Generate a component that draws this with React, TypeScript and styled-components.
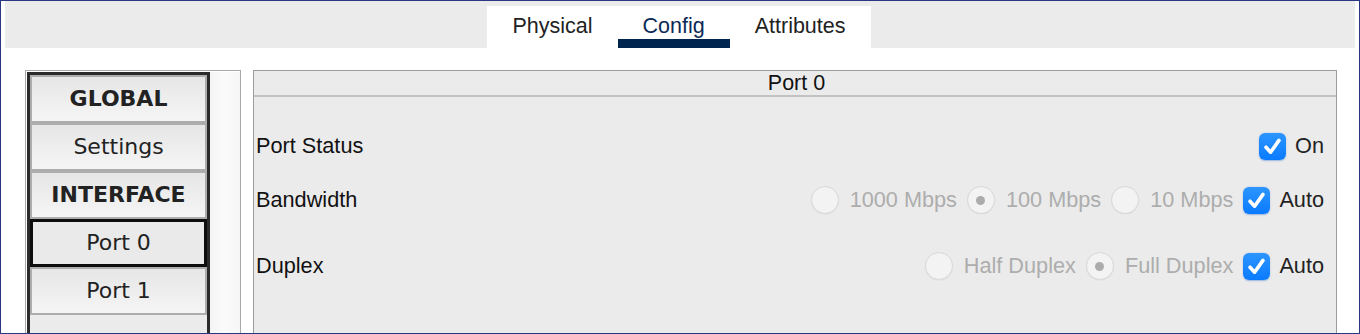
import React from "react";
import styled, { createGlobalStyle } from "styled-components";

const Global = createGlobalStyle`
  html, body { margin: 0; padding: 0; background: #ffffff; }
  * { box-sizing: border-box; }
`;

const Frame = styled.div`
  width: 1360px;
  height: 334px;
  border: 1px solid #2b3784;
  background: #ffffff;
  overflow: hidden;
  display: flex;
  flex-direction: column;
`;

const TopBar = styled.div`
  height: 47px;
  flex-shrink: 0;
  margin: 0 4px;
  background: #ebebeb;
  display: flex;
  justify-content: center;
  align-items: flex-end;
`;

const TabStrip = styled.div`
  display: flex;
  height: 42px;
  background: #ffffff;
  margin-left: -2px;
`;

const Tab = styled.div<{ $active?: boolean }>`
  height: 42px;
  padding: 8px 25px 0;
  display: flex;
  align-items: flex-start;
  font-family: "Liberation Sans", Arial, sans-serif;
  font-size: 21.5px;
  color: ${(p) => (p.$active ? "#0c2a55" : "#222222")};
  border-bottom: 9px solid ${(p) => (p.$active ? "#00264f" : "transparent")};
`;

const Body = styled.div`
  display: flex;
  align-items: flex-start;
  padding: 22px 0 0 24px;
  gap: 12px;
  flex: 1;
  min-height: 0;
  overflow: hidden;
`;

const Sidebar = styled.div`
  width: 216px;
  height: 270px;
  flex-shrink: 0;
  border: 1px solid #a8a8a8;
  border-bottom: none;
  background: #ffffff;
  display: flex;
  padding: 1px 0 0 1px;
`;

const List = styled.div`
  width: 183px;
  border: 3px solid #2b2b2b;
  border-bottom: none;
  background: #ebebeb;
  display: flex;
  flex-direction: column;
`;

const Track = styled.div`
  flex: 1;
  background: linear-gradient(to right, #f4f4f4, #fbfbfb 50%, #f6f6f6);
`;

const Item = styled.div<{ $bold?: boolean; $selected?: boolean }>`
  height: 48px;
  flex-shrink: 0;
  display: flex;
  align-items: center;
  justify-content: center;
  font-family: "DejaVu Sans", Verdana, sans-serif;
  font-size: 22px;
  font-weight: ${(p) => (p.$bold ? 700 : 400)};
  color: #222222;
  border: ${(p) => (p.$selected ? "3px solid #0d0d0d" : "2px solid #adadad")};
  background: ${(p) =>
    p.$selected ? "#eaeaea" : "linear-gradient(to bottom, #e6e6e6, #f5f5f5)"};
  padding-bottom: 1px;
`;

const Panel = styled.div`
  width: 1084px;
  height: 270px;
  flex-shrink: 0;
  border: 1px solid #9c9c9c;
  border-bottom: none;
  background: #ebebeb;
  display: flex;
  flex-direction: column;
`;

const PanelHeader = styled.div`
  height: 26px;
  flex-shrink: 0;
  border-bottom: 2px solid #c2c2c2;
  display: flex;
  align-items: center;
  justify-content: center;
  font-family: "Liberation Sans", Arial, sans-serif;
  font-size: 21.5px;
  color: #111111;
  padding-left: 3px;
`;

const Rows = styled.div`
  display: flex;
  flex-direction: column;
  padding-top: 25px;
`;

const Row = styled.div<{ $space: number }>`
  height: 48px;
  flex-shrink: 0;
  margin-top: ${(p) => p.$space}px;
  display: flex;
  align-items: center;
  justify-content: space-between;
  padding: 0 12px 0 2px;
  font-family: "Liberation Sans", Arial, sans-serif;
  font-size: 21.7px;
`;

const Label = styled.span`
  color: #111111;
`;

const Controls = styled.div`
  display: flex;
  align-items: center;
  gap: 10px;
`;

const Option = styled.label<{ $gap: number }>`
  display: flex;
  align-items: center;
  gap: ${(p) => p.$gap}px;
`;

const RadioCircle = styled.span<{ $checked?: boolean }>`
  width: 28px;
  height: 28px;
  border-radius: 50%;
  background: #f3f3f3;
  border: 1px solid #d9d9d9;
  box-shadow: 0 0.5px 1px rgba(0, 0, 0, 0.06);
  display: flex;
  align-items: center;
  justify-content: center;
  &::after {
    content: "";
    width: 9px;
    height: 9px;
    border-radius: 50%;
    background: #acacac;
    display: ${(p) => (p.$checked ? "block" : "none")};
  }
`;

const DimText = styled.span`
  color: #adadad;
`;

const OnText = styled.span`
  color: #222222;
`;

const CheckBox = styled.span`
  width: 27px;
  height: 27px;
  border-radius: 6px;
  background: linear-gradient(to bottom, #2c95ff, #0a7bff);
  box-shadow: 0 0.5px 1.5px rgba(0, 80, 200, 0.35);
  display: flex;
  align-items: center;
  justify-content: center;
`;

function Check() {
  return (
    <CheckBox>
      <svg width="27" height="27" viewBox="0 0 27 27">
        <path
          d="M7 14.2 L11.6 19.2 L20 7.4"
          fill="none"
          stroke="#ffffff"
          strokeWidth="3.6"
          strokeLinecap="round"
          strokeLinejoin="round"
        />
      </svg>
    </CheckBox>
  );
}

function Radio({ label, checked }: { label: string; checked?: boolean }) {
  return (
    <Option $gap={11}>
      <RadioCircle $checked={checked} />
      <DimText>{label}</DimText>
    </Option>
  );
}

function Checked({ label }: { label: string }) {
  return (
    <Option $gap={9}>
      <Check />
      <OnText>{label}</OnText>
    </Option>
  );
}

export default function App() {
  return (
    <>
      <Global />
      <Frame>
        <TopBar>
          <TabStrip>
            <Tab>Physical</Tab>
            <Tab $active>Config</Tab>
            <Tab>Attributes</Tab>
          </TabStrip>
        </TopBar>
        <Body>
          <Sidebar>
            <List>
              <Item $bold>GLOBAL</Item>
              <Item>Settings</Item>
              <Item $bold>INTERFACE</Item>
              <Item $selected>Port 0</Item>
              <Item>Port 1</Item>
            </List>
            <Track />
          </Sidebar>
          <Panel>
            <PanelHeader>Port 0</PanelHeader>
            <Rows>
              <Row $space={0}>
                <Label>Port Status</Label>
                <Controls>
                  <Checked label="On" />
                </Controls>
              </Row>
              <Row $space={6}>
                <Label>Bandwidth</Label>
                <Controls>
                  <Radio label="1000 Mbps" />
                  <Radio label="100 Mbps" checked />
                  <Radio label="10 Mbps" />
                  <Checked label="Auto" />
                </Controls>
              </Row>
              <Row $space={18}>
                <Label>Duplex</Label>
                <Controls>
                  <Radio label="Half Duplex" />
                  <Radio label="Full Duplex" checked />
                  <Checked label="Auto" />
                </Controls>
              </Row>
            </Rows>
          </Panel>
        </Body>
      </Frame>
    </>
  );
}
